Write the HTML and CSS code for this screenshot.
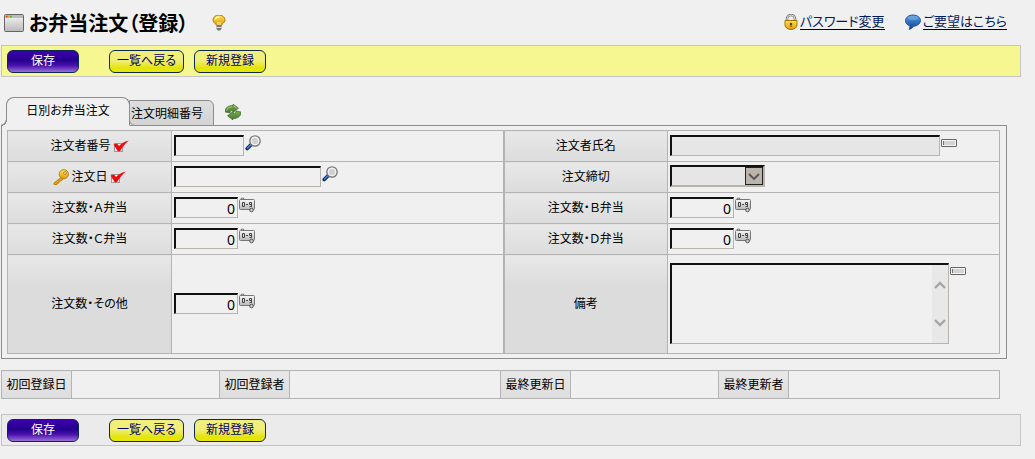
FILE: index.html
```
<!DOCTYPE html>
<html lang="ja">
<head>
  <meta charset="UTF-8">
  <title>お弁当注文（登録）</title>
  <link rel="stylesheet" href="styles.css">
</head>
<body>
  <svg class="defs" width="0" height="0" aria-hidden="true">
    <defs>
      <linearGradient id="metal" x1="0" y1="0" x2="0" y2="1">
        <stop offset="0" stop-color="#f8f8f8"/><stop offset="1" stop-color="#b8b8b8"/>
      </linearGradient>
      <linearGradient id="gold" x1="0" y1="0" x2="0" y2="1">
        <stop offset="0" stop-color="#ffe44a"/><stop offset="1" stop-color="#e09a10"/>
      </linearGradient>
      <linearGradient id="blue" x1="0" y1="0" x2="0" y2="1">
        <stop offset="0" stop-color="#5b9fe0"/><stop offset="1" stop-color="#0c3f96"/>
      </linearGradient>
      <linearGradient id="green" x1="0" y1="0" x2="0" y2="1">
        <stop offset="0" stop-color="#7fae50"/><stop offset="1" stop-color="#3f7a2c"/>
      </linearGradient>
    </defs>
    <symbol id="check" viewBox="0 0 16 13">
      <rect x="1.5" y="3.500" width="8" height="8" fill="#eee" stroke="#999"/>
      <path d="M.5 4.500 4 3.500 6 6C8.500 3.500 11 1.500 15.800.5 12 3.800 9 7.500 7 11.200H4.800Z" fill="#f00a0a"/>
    </symbol>
    <symbol id="search" viewBox="0 0 16 16">
      <path d="M6 9.800 2.200 13.600" stroke="#0b2c7c" stroke-width="3.600" stroke-linecap="round"/>
      <path d="M5.500 10 2.500 13" stroke="#4c8be0" stroke-width="1.300" stroke-linecap="round"/>
      <circle cx="10" cy="6" r="5.200" fill="url(#metal)" stroke="#777" stroke-width="1.300"/>
      <circle cx="10" cy="6" r="3.800" fill="#d0d0d0" stroke="#f8f8f8"/>
    </symbol>
    <symbol id="num" viewBox="0 0 16 16">
      <path d="M2 3.500V2.500a1.500 1.500 0 1 1 3 0" fill="none" stroke="#777" stroke-width="1.200"/>
      <rect x=".5" y="2.500" width="15" height="10" rx="1" fill="url(#metal)" stroke="#777"/>
      <path d="M3.500 5.500h2v4h-2zM7 7.500h2M12.500 7.500h-2v-2h2v4h-2" fill="none" stroke="#444"/>
      <circle cx="12.500" cy="13" r="1.800" fill="#ccc" stroke="#555"/>
    </symbol>
    <symbol id="textfield" viewBox="0 0 16 8">
      <rect x=".5" y=".5" width="15" height="7" rx=".5" fill="#f4f4f4" stroke="#666"/>
      <path d="M2 2h12v4H2z" fill="#d4d4d4"/>
      <path d="M2.500 2v4" stroke="#777"/>
    </symbol>
  </svg>

  <header class="header">
    <svg class="icon-window" viewBox="0 0 20 18">
      <rect x=".5" y=".5" width="19" height="17" rx="1" fill="url(#metal)" stroke="#666"/>
      <path d="M1 1h18v3H1z" fill="#bbb"/>
      <path d="M2 2.500h1.500" stroke="#d33" stroke-width="1.500"/><path d="M4 2.500h1.500" stroke="#e5a800" stroke-width="1.500"/><path d="M6 2.500h1.500" stroke="#4a4" stroke-width="1.500"/>
    </svg>
    <h1>お弁当注文（登録）</h1>
    <svg class="icon-bulb" viewBox="0 0 14 16">
      <path d="M4.500 10.500C4.500 8.500 1 8 1 5a6 5 0 0 1 12 0c0 3-3.500 3.500-3.500 5.500z" fill="url(#gold)" stroke="#b87800"/>
      <path d="M3 4.500Q4 2 7.500 2" fill="none" stroke="#fffbd0" stroke-width="1.600"/>
      <path d="M6 10V7M8 10V7" fill="none" stroke="#fff0a0"/>
      <path d="M4.500 11h5v3L8 15.500H6L4.500 14z" fill="#777"/><path d="M4.500 12.500h5" stroke="#ddd"/>
    </svg>
    <nav class="links">
      <a href="#password"><svg class="icon-lock" viewBox="0 0 14 16">
        <path d="M3 8V5a4 4 0 0 1 8 0v3" fill="none" stroke="#777" stroke-width="2.600"/>
        <path d="M3 8V5a4 4 0 0 1 8 0v3" fill="none" stroke="#ddd"/>
        <path d="M1 6.500h12V11a6 4.500 0 0 1-12 0z" fill="url(#gold)" stroke="#a67400"/>
        <circle cx="7" cy="10" r="1.300" fill="#6b4500"/><path d="M7 10v3" stroke="#6b4500"/>
      </svg><span>パスワード変更</span></a>
      <a href="#request"><svg class="icon-talk" viewBox="0 0 16 16">
        <path d="M8 1c4.500 0 7.500 2.500 7.500 5.500S12.500 12 8.500 12.300C7.500 14 6 15 4 15.300c.8-1 1-2.200.8-3.500C2 11 .5 9 .5 6.500.500 3.500 3.500 1 8 1z" fill="url(#blue)" stroke="#123f86" stroke-width=".8"/>
        <ellipse cx="8" cy="4" rx="5.500" ry="2" fill="#8fc0f0" opacity=".4"/>
      </svg><span>ご要望はこちら</span></a>
    </nav>
  </header>

  <div class="toolbar">
    <button type="button" class="btn save">保存</button>
    <button type="button" class="btn back">一覧へ戻る</button>
    <button type="button" class="btn">新規登録</button>
  </div>

  <main class="content">
    <div class="tabs">
      <button type="button" class="tab active">日別お弁当注文</button>
      <button type="button" class="tab">注文明細番号</button>
      <svg class="icon-refresh" viewBox="0 0 16 16">
        <path d="M0 8C0 3.500 3.500 1.300 8 1.500V0l5.500 4.200L8 8.500V6.500C6.500 6.300 5.300 7 5 9z" fill="url(#green)" stroke="#3c6b2a" stroke-width=".6"/>
        <path d="M16 8c0 4.500-3.500 6.700-8 6.500V16l-5.500-4.200L8 7.500v2c1.500.2 2.700-.5 3-2.500z" fill="url(#green)" stroke="#2c5a1c" stroke-width=".6"/>
        <path d="M9 2 11.800 4.200M1.500 6.500q1-3.300 5-3.700" fill="none" stroke="#b6d494" stroke-width=".8"/>
      </svg>
    </div>

    <form class="panel">
      <table class="form-table">
        <colgroup><col class="col-label"><col><col class="col-label"><col></colgroup>
        <tr>
          <th><label for="userNo">注文者番号</label><svg class="icon-check"><use href="#check"/></svg></th>
          <td><div class="field"><input type="text" id="userNo" class="w-code"><svg class="icon-search"><use href="#search"/></svg></div></td>
          <th><label for="userName">注文者氏名</label></th>
          <td><div class="field"><input type="text" id="userName" class="w-name" readonly><svg class="icon-text"><use href="#textfield"/></svg></div></td>
        </tr>
        <tr>
          <th><svg class="icon-key" viewBox="0 0 16 16">
            <path d="M8 8.500 1 14v1.500h3V14h2v-2h2l2-2" fill="#e8a818" stroke="#a87000" stroke-width=".8"/>
            <circle cx="10.800" cy="5.200" r="4.600" fill="url(#gold)" stroke="#a87000" stroke-width=".8"/>
            <circle cx="12" cy="4" r="1.400" fill="#f0f0f0" stroke="#a87000" stroke-width=".8"/>
          </svg><label for="orderDate">注文日</label><svg class="icon-check"><use href="#check"/></svg></th>
          <td><div class="field"><input type="text" id="orderDate" class="w-date"><svg class="icon-search"><use href="#search"/></svg></div></td>
          <th><label for="deadline">注文締切</label></th>
          <td><div class="field"><div class="select">
            <select id="deadline"><option></option></select>
            <svg class="arrow" viewBox="0 0 16 16"><path d="m3 6 5 5 5-5" fill="none" stroke="#555" stroke-width="1.800"/></svg>
          </div></div></td>
        </tr>
        <tr>
          <th><label for="numA">注文数・Ａ弁当</label></th>
          <td><div class="field"><input type="text" id="numA" class="w-num" value="0"><svg class="icon-num"><use href="#num"/></svg></div></td>
          <th><label for="numB">注文数・Ｂ弁当</label></th>
          <td><div class="field"><input type="text" id="numB" class="w-num" value="0"><svg class="icon-num"><use href="#num"/></svg></div></td>
        </tr>
        <tr>
          <th><label for="numC">注文数・Ｃ弁当</label></th>
          <td><div class="field"><input type="text" id="numC" class="w-num" value="0"><svg class="icon-num"><use href="#num"/></svg></div></td>
          <th><label for="numD">注文数・Ｄ弁当</label></th>
          <td><div class="field"><input type="text" id="numD" class="w-num" value="0"><svg class="icon-num"><use href="#num"/></svg></div></td>
        </tr>
        <tr class="tall">
          <th><label for="numOther">注文数・その他</label></th>
          <td><div class="field"><input type="text" id="numOther" class="w-num" value="0"><svg class="icon-num"><use href="#num"/></svg></div></td>
          <th><label for="note">備考</label></th>
          <td><div class="field"><div class="memo">
            <textarea id="note"></textarea>
            <div class="scroll">
              <svg viewBox="0 0 12 9"><path d="m1 7 5-5 5 5" fill="none" stroke="#a6a6a6" stroke-width="2.400"/></svg>
              <svg viewBox="0 0 12 9"><path d="m1 2 5 5 5-5" fill="none" stroke="#a6a6a6" stroke-width="2.400"/></svg>
            </div>
          </div><svg class="icon-text"><use href="#textfield"/></svg></div></td>
        </tr>
      </table>
    </form>

    <table class="info-table">
      <tr>
        <th>初回登録日</th><td class="date"></td>
        <th>初回登録者</th><td></td>
        <th>最終更新日</th><td class="date"></td>
        <th>最終更新者</th><td></td>
      </tr>
    </table>
  </main>

  <div class="toolbar">
    <button type="button" class="btn save">保存</button>
    <button type="button" class="btn back">一覧へ戻る</button>
    <button type="button" class="btn">新規登録</button>
  </div>
</body>
</html>
```

FILE: styles.css
```
* {
  box-sizing: border-box;
}
body {
  margin: 0;
  padding: 0 14px 0 1px;
  background: #f0f0f0;
  color: #000;
  font-family: "Noto Sans CJK JP", sans-serif;
  font-size: 12px;
  line-height: 18px;
  font-feature-settings: "palt";
}
svg {
  display: block;
  flex: none;
}
.defs {
  position: absolute;
}

/* header */
.header {
  display: flex;
  align-items: center;
  height: 45px;
  padding-left: 3px;
}
h1 {
  margin: 0 24px 0 5px;
  font-size: 20px;
  line-height: 28px;
}
.icon-window {
  width: 20px;
  height: 18px;
}
.icon-bulb {
  width: 14px;
  height: 16px;
}
.links {
  display: flex;
  gap: 20px;
  margin-left: auto;
  padding: 0 14px 2px 0;
}
.links a {
  display: flex;
  align-items: center;
  gap: 2px;
  color: #001a5c;
  font-size: 13px;
  text-decoration: none;
}
.links span {
  border-bottom: 1px solid #000;
  line-height: 16px;
}
.icon-lock {
  width: 14px;
  height: 16px;
}
.icon-talk {
  width: 16px;
  height: 16px;
}

/* button bar */
.toolbar {
  display: flex;
  align-items: center;
  height: 32px;
  padding-left: 5px;
  border: 1px solid #c4c4c4;
  background: repeating-conic-gradient(#f6f690 0 25%, #ececec 0 50%) 1px 0 / 2px 2px;
}
.btn {
  width: 72px;
  height: 23px;
  margin-right: 10px;
  padding: 0 0 4px;
  border: 1px solid #0c2850;
  border-radius: 6px;
  background: linear-gradient(#f2f07c, #f0ee78 45%, #e4e410 80%, #e8e800);
  color: #000060;
  font: inherit;
  cursor: pointer;
}
.btn.save {
  margin-right: 30px;
  background: linear-gradient(#4000b0, #24008c 45%, #4c14b0 70%, #9a70d4);
  color: #fff;
}
.btn.back {
  width: 75px;
}

/* tabs */
.content {
  padding: 20px 14px 15px 0;
}
.tabs {
  display: flex;
  align-items: flex-end;
  padding-left: 5px;
}
.tab {
  position: relative;
  width: 85px;
  height: 26px;
  margin: 0 0 -1px -1px;
  padding: 0 0 0 1px;
  border: 1px solid #8c8c8c;
  border-radius: 0 6px 0 6px;
  background: linear-gradient(#dedede, #d4d4d4);
  color: #000;
  font: inherit;
  text-align: left;
}
.tab.active {
  z-index: 1;
  width: 124px;
  height: 29px;
  margin-left: 0;
  padding: 0 0 3px;
  border-bottom-color: #f0f0f0;
  border-radius: 8px 8px 0 0;
  background: #f0f0f0;
  text-align: center;
}
/* curved foot on the left of the open tab */
.tab.active::before {
  content: "";
  position: absolute;
  left: -6px;
  bottom: -1px;
  width: 6px;
  height: 6px;
  background: radial-gradient(circle at 0 0, #f0f0f0 4px, #8c8c8c 5px 6px, #f0f0f0 6px);
}
.icon-refresh {
  width: 16px;
  height: 16px;
  margin: 0 0 5px 11px;
}

/* form */
.panel {
  padding: 4px 6px 4px 5px;
  border: 1px solid #8c8c8c;
}
table {
  width: 100%;
  border-collapse: collapse;
  table-layout: fixed;
}
th, td {
  padding: 0 2px 2px;
  border: 1px solid #b4b4b4;
}
th {
  background: linear-gradient(#e8e8e8, #dcdcdc 30px);
  font-weight: normal;
}
.form-table tr {
  height: 31px;
}
.form-table .tall {
  height: 99px;
}
.form-table th:nth-child(3) {
  border-left-width: 2px;
}
.col-label {
  width: 164px;
}
th svg {
  display: inline-block;
  vertical-align: middle;
}
.icon-check {
  width: 16px;
  height: 13px;
  margin-left: 2px;
}
.icon-key {
  width: 16px;
  height: 16px;
  margin-right: 2px;
}
.field {
  display: flex;
  align-items: flex-start;
}
input, .select, .memo {
  border: 1px solid #b8b4ac;
  border-top: 2px solid #111;
  border-left: 2px solid #111;
  background: #f0f0f0;
}
input {
  height: 21px;
  padding: 1px 2px 0;
  border-radius: 0;
  font: 14px "Noto Sans", sans-serif;
}
input[readonly] {
  background: #e6e6e6;
}
.w-code {
  width: 70px;
}
.w-date {
  width: 147px;
}
.w-name {
  width: 270px;
}
.w-num {
  width: 64px;
  text-align: right;
}
.icon-search, .icon-num {
  width: 16px;
  height: 16px;
  margin-left: 1px;
}
.icon-text {
  width: 16px;
  height: 8px;
  margin: 4px 0 0 1px;
}
.select {
  display: flex;
  width: 95px;
  height: 22px;
  border-right-width: 2px;
  border-bottom-width: 2px;
  background: #e6e6e6;
}
select {
  flex: 1;
  min-width: 0;
  border: 0;
  background: transparent;
  appearance: none;
}
.arrow {
  width: 18px;
  height: 18px;
  border: 1px solid #222;
  background: #bab4aa;
}
.memo {
  display: flex;
  width: 279px;
  height: 81px;
}
textarea {
  flex: 1;
  min-width: 0;
  border: 0;
  background: transparent;
  resize: none;
}
.scroll {
  display: flex;
  flex-direction: column;
  justify-content: space-between;
  align-items: center;
  width: 16px;
  padding: 16px 0;
  background: #e8e8e8;
}
.scroll svg {
  width: 12px;
  height: 9px;
}

/* record info */
.info-table {
  width: calc(100% - 7px);
  height: 29px;
  margin-top: 11px;
}
.info-table th {
  width: 70px;
}
.info-table .date {
  width: 148px;
}
```
